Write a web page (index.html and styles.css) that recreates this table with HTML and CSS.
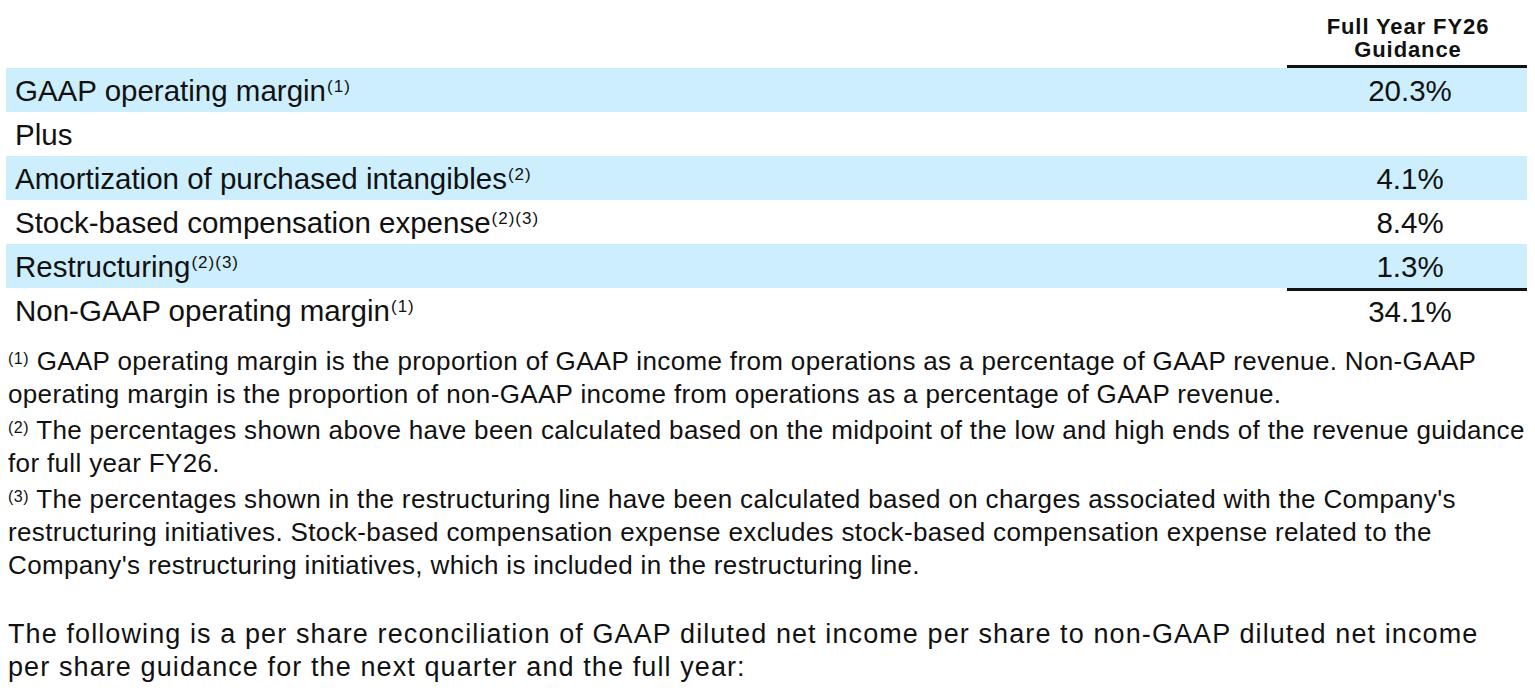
FILE: index.html
```html
<!DOCTYPE html>
<html>
<head>
<meta charset="utf-8">
<link rel="stylesheet" href="styles.css">
</head>
<body>
<div class="page">
  <div class="table">
    <div class="head-spacer"></div>
    <div class="head-cell">Full Year FY26<br>Guidance</div>

    <div class="label blue">GAAP operating margin<sup>(1)</sup></div>
    <div class="value blue">20.3%</div>

    <div class="label">Plus</div>
    <div class="value"></div>

    <div class="label blue">Amortization of purchased intangibles<sup>(2)</sup></div>
    <div class="value blue">4.1%</div>

    <div class="label">Stock-based compensation expense<sup>(2)(3)</sup></div>
    <div class="value">8.4%</div>

    <div class="label blue">Restructuring<sup>(2)(3)</sup></div>
    <div class="value blue">1.3%</div>

    <div class="label">Non-GAAP operating margin<sup>(1)</sup></div>
    <div class="value total">34.1%</div>
  </div>

  <div class="notes">
    <p><sup>(1)</sup> GAAP operating margin is the proportion of GAAP income from operations as a percentage of GAAP revenue. Non-GAAP operating margin is the proportion of non-GAAP income from operations as a percentage of GAAP revenue.</p>
    <p><sup>(2)</sup> The percentages shown above have been calculated based on the midpoint of the low and high ends of the revenue guidance for full year FY26.</p>
    <p><sup>(3)</sup> The percentages shown in the restructuring line have been calculated based on charges associated with the Company's restructuring initiatives. Stock-based compensation expense excludes stock-based compensation expense related to the Company's restructuring initiatives, which is included in the restructuring line.</p>
  </div>

  <p class="intro">The following is a per share reconciliation of GAAP diluted net income per share to non-GAAP diluted net income per share guidance for the next quarter and the full year:</p>
</div>
</body>
</html>
```

FILE: styles.css
```css
html, body {
  margin: 0;
  padding: 0;
  background: #ffffff;
}

body {
  font-family: "Liberation Sans", Arial, sans-serif;
  color: #111111;
}

.page {
  width: 1535px;
  height: 690px;
  overflow: hidden;
}

.table {
  display: grid;
  grid-template-columns: 1fr 240px;
  margin-left: 6px;
  width: 1521px;
}

.head-cell {
  height: 68px;
  border-bottom: 3px solid #111;
  box-sizing: border-box;
  display: flex;
  align-items: flex-end;
  justify-content: center;
  text-align: center;
  font-weight: bold;
  font-size: 22px;
  line-height: 23px;
  letter-spacing: 0.9px;
  padding-bottom: 4px;
  padding-left: 2px;
}

.label,
.value {
  height: 44px;
  box-sizing: border-box;
  padding-top: 2px;
  line-height: 42px;
  font-size: 29.5px;
  white-space: nowrap;
}

.label {
  padding-left: 9px;
}

.value {
  text-align: center;
  padding-left: 6px;
}

.blue {
  background: #cdeefd;
}

.value.total {
  border-top: 3px solid #111;
  padding-top: 1px;
  line-height: 40px;
}

sup {
  font-size: 17px;
  letter-spacing: 1px;
  line-height: 1;
  vertical-align: 9px;
  margin-left: 1px;
}

.notes {
  margin: 13px 0 0 8px;
  width: 1527px;
}

.notes p {
  margin: 0 0 3px 0;
  font-size: 26px;
  line-height: 33px;
  letter-spacing: 0.35px;
}

.notes sup {
  font-size: 16px;
  letter-spacing: 0.5px;
  vertical-align: 6px;
  margin-left: 0;
}

.intro {
  margin: 36px 0 0 8px;
  width: 1510px;
  font-size: 27px;
  line-height: 33px;
  letter-spacing: 1.1px;
}
```
